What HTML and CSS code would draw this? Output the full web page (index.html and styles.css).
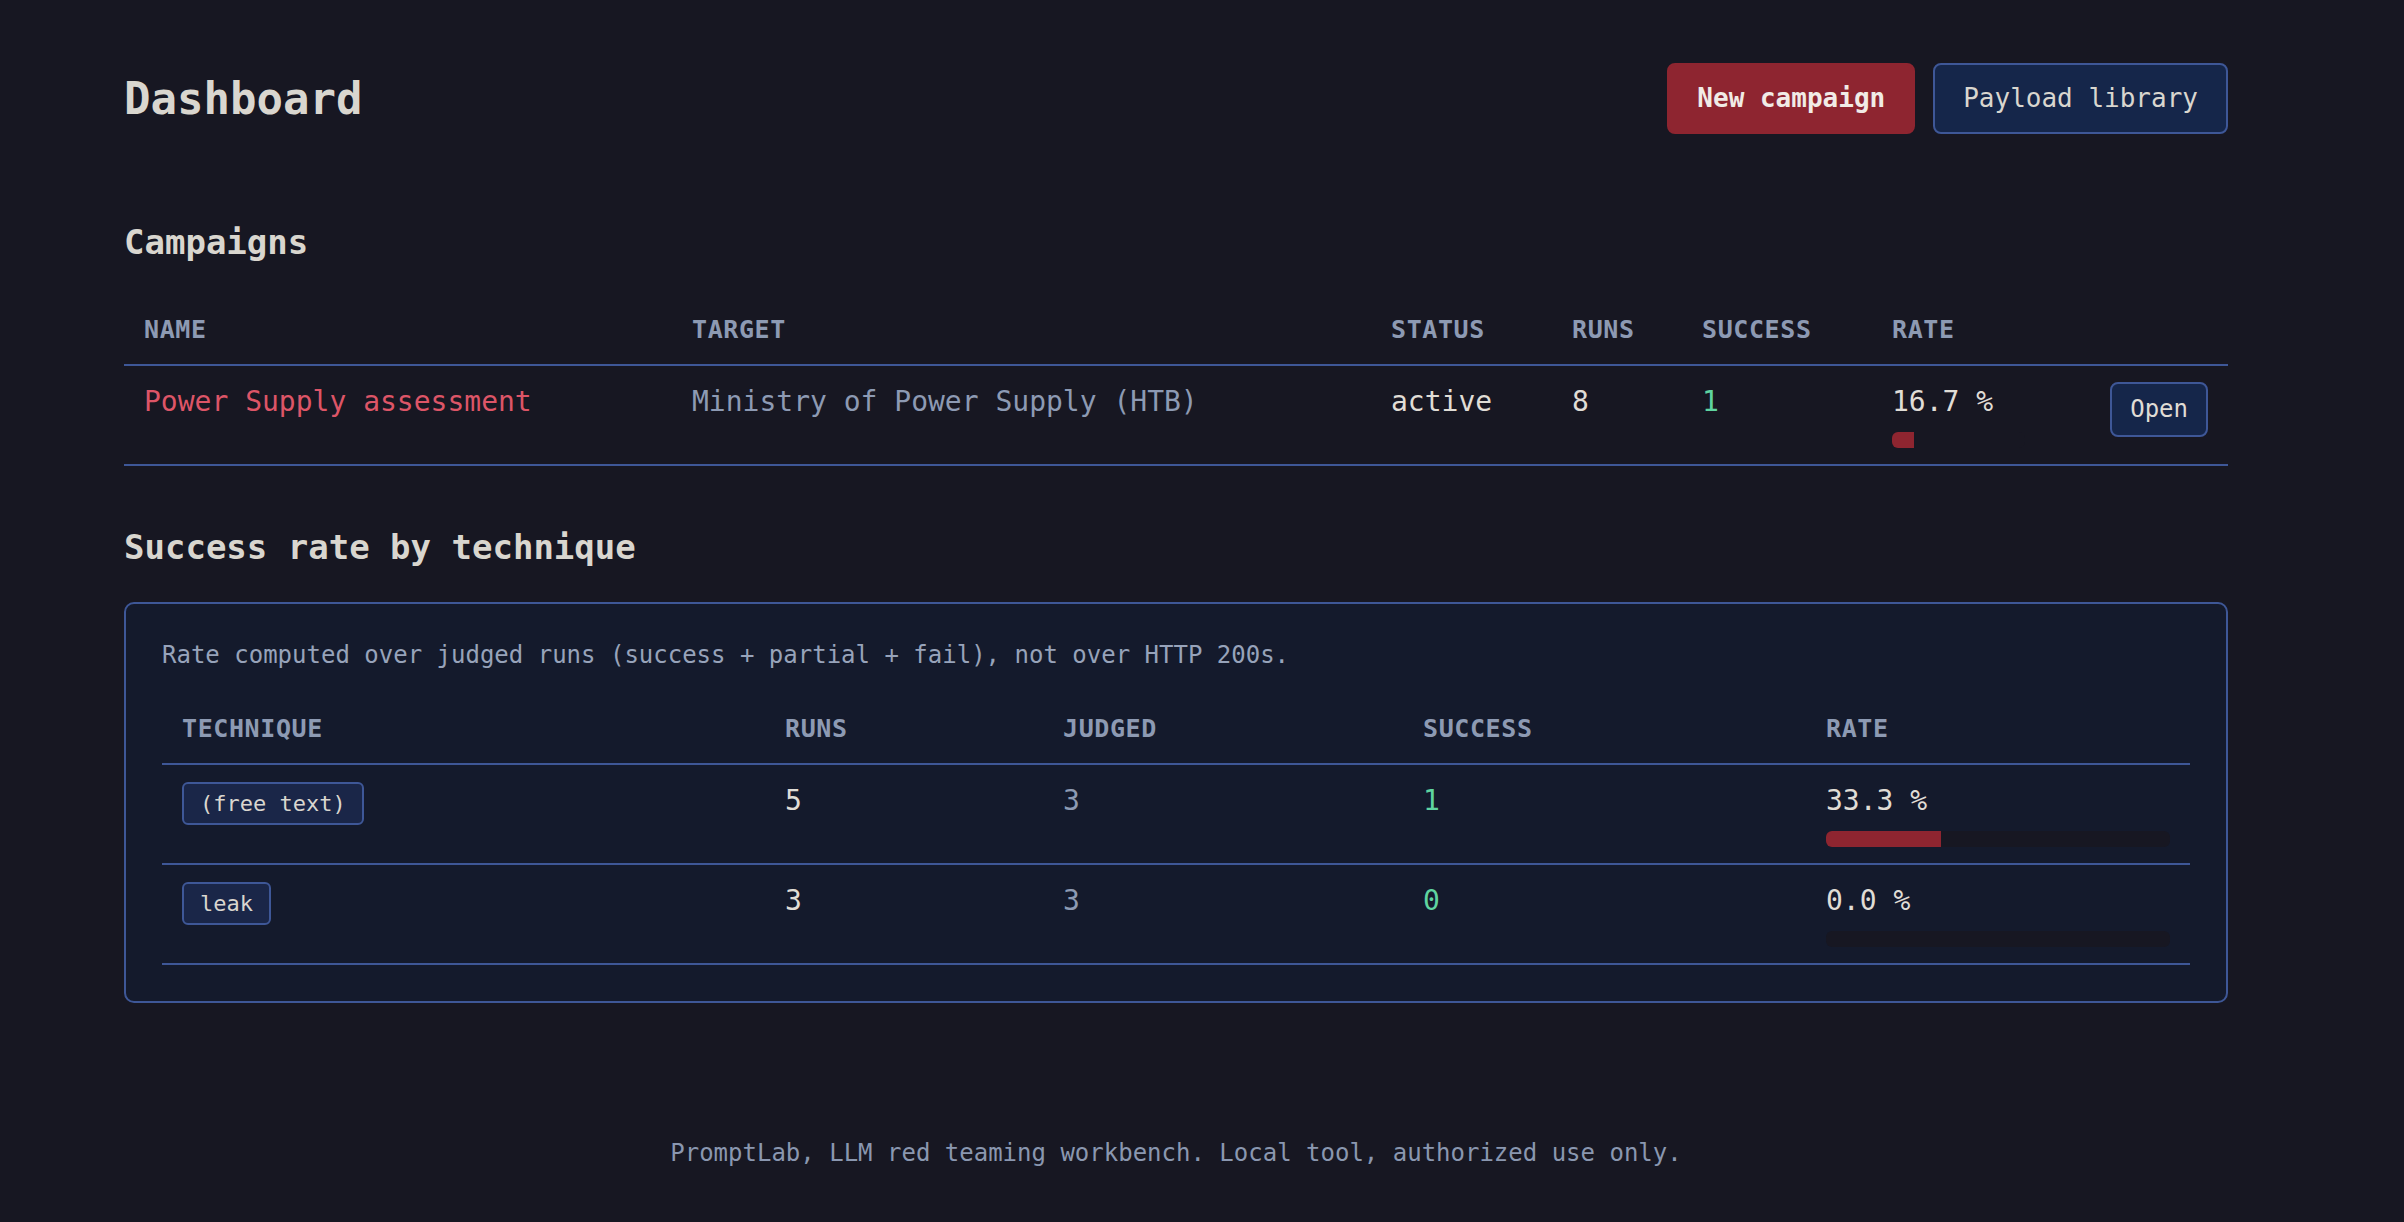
FILE: index.html
```html
<!DOCTYPE html>
<html lang="en">

<head>
    <meta charset="UTF-8">
    <meta name="viewport" content="width=device-width, initial-scale=1.0">
    <title>PromptLab - Dashboard</title>
    <link rel="stylesheet" href="styles.css">
</head>

<body>
    <main class="page">
        <header class="topbar">
            <h1>Dashboard</h1>
            <div class="actions">
                <button class="btn btn-primary">New campaign</button>
                <button class="btn">Payload library</button>
            </div>
        </header>

        <section class="section">
            <h2>Campaigns</h2>
            <table class="grid">
                <thead>
                    <tr>
                        <th class="c-name">Name</th>
                        <th class="c-target">Target</th>
                        <th class="c-status">Status</th>
                        <th class="c-runs">Runs</th>
                        <th class="c-success">Success</th>
                        <th class="c-rate">Rate</th>
                        <th class="c-open"></th>
                    </tr>
                </thead>
                <tbody>
                    <tr>
                        <td><a class="name" href="#">Power Supply assessment</a></td>
                        <td class="muted">Ministry of Power Supply (HTB)</td>
                        <td>active</td>
                        <td>8</td>
                        <td class="ok">1</td>
                        <td>
                            <div>16.7 %</div>
                            <div class="bar"><div class="bar-fill" style="width: 16.7%"></div></div>
                        </td>
                        <td class="right"><button class="btn btn-small">Open</button></td>
                    </tr>
                </tbody>
            </table>
        </section>

        <section class="section">
            <h2>Success rate by technique</h2>
            <div class="panel">
                <p class="note">Rate computed over judged runs (success + partial + fail), not over HTTP 200s.</p>
                <table class="grid">
                    <thead>
                        <tr>
                            <th class="t-technique">Technique</th>
                            <th class="t-runs">Runs</th>
                            <th class="t-judged">Judged</th>
                            <th class="t-success">Success</th>
                            <th class="t-rate">Rate</th>
                        </tr>
                    </thead>
                    <tbody>
                        <tr>
                            <td><span class="tag">(free text)</span></td>
                            <td>5</td>
                            <td class="muted">3</td>
                            <td class="ok">1</td>
                            <td>
                                <div>33.3 %</div>
                                <div class="bar"><div class="bar-fill" style="width: 33.3%"></div></div>
                            </td>
                        </tr>
                        <tr>
                            <td><span class="tag">leak</span></td>
                            <td>3</td>
                            <td class="muted">3</td>
                            <td class="ok">0</td>
                            <td>
                                <div>0.0 %</div>
                                <div class="bar"><div class="bar-fill" style="width: 0%"></div></div>
                            </td>
                        </tr>
                    </tbody>
                </table>
            </div>
        </section>

        <footer class="footer">PromptLab, LLM red teaming workbench. Local tool, authorized use only.</footer>
    </main>
</body>

</html>
```

FILE: styles.css
```css
* {
    box-sizing: border-box;
    margin: 0;
    padding: 0;
}

body {
    background: #171722;
    color: #e0ddd6;
    font-family: "DejaVu Sans Mono", monospace;
    font-size: 28px;
}

.page {
    width: 2104px;
    margin-left: 124px;
    padding: 63px 0 40px;
}

.topbar {
    display: flex;
    justify-content: space-between;
    align-items: center;
    margin-bottom: 88px;
}

h1 {
    font-size: 44px;
    color: #d9d6cf;
}

h2 {
    font-size: 34px;
    color: #d9d6cf;
    margin-bottom: 35px;
}

.actions {
    display: flex;
    gap: 18px;
}

.btn {
    font-family: inherit;
    font-size: 26px;
    line-height: 31px;
    padding: 18px 28px;
    color: #d9d6cf;
    background: #15264a;
    border: 2px solid #3e5797;
    border-radius: 8px;
}

.btn-primary {
    background: #8e2530;
    border-color: #8e2530;
    color: #f1ebe6;
    font-weight: bold;
}

.btn-small {
    font-size: 24px;
    line-height: 29px;
    padding: 11px 18px;
    color: #e0ddd6;
    vertical-align: top;
    margin-top: -3px;
}

.section + .section {
    margin-top: 61px;
}

.grid {
    width: 100%;
    border-collapse: collapse;
    table-layout: fixed;
}

.grid th {
    text-align: left;
    font-size: 25px;
    letter-spacing: 0.6px;
    text-transform: uppercase;
    color: #8d9ab3;
    padding: 18px 20px 20px;
    border-bottom: 2px solid #3e5797;
}

.grid td {
    padding: 19px 20px 16px;
    line-height: 34px;
    vertical-align: top;
    border-bottom: 2px solid #3e5797;
}

.c-name { width: 548px; }
.c-target { width: 699px; }
.c-status { width: 181px; }
.c-runs { width: 130px; }
.c-success { width: 190px; }
.c-rate { width: 173px; }
.c-open { width: 183px; }

.t-technique { width: 603px; }
.t-runs { width: 278px; }
.t-judged { width: 360px; }
.t-success { width: 403px; }
.t-rate { width: 384px; }

.name {
    color: #dd5567;
    text-decoration: none;
}

.muted {
    color: #8d9ab3;
}

.ok {
    color: #5fd4a0;
}

.right {
    text-align: right;
}

.bar {
    height: 16px;
    margin-top: 13px;
    background: #171722;
    border-radius: 6px;
    overflow: hidden;
}

.bar-fill {
    height: 100%;
    background: #8e2530;
}

.panel {
    background: #141a2c;
    border: 2px solid #3e5797;
    border-radius: 10px;
    padding: 36px;
}

.note {
    font-size: 24px;
    line-height: 1.3;
    color: #97a3ba;
    margin-bottom: 25px;
}

.tag {
    display: inline-block;
    vertical-align: top;
    margin-top: -2px;
    font-size: 22px;
    line-height: normal;
    padding: 7px 16px;
    color: #d9d6cf;
    background: #1a2648;
    border: 2px solid #3e5797;
    border-radius: 6px;
}

.footer {
    margin-top: 136px;
    text-align: center;
    font-size: 24px;
    color: #8a97b0;
}
```
